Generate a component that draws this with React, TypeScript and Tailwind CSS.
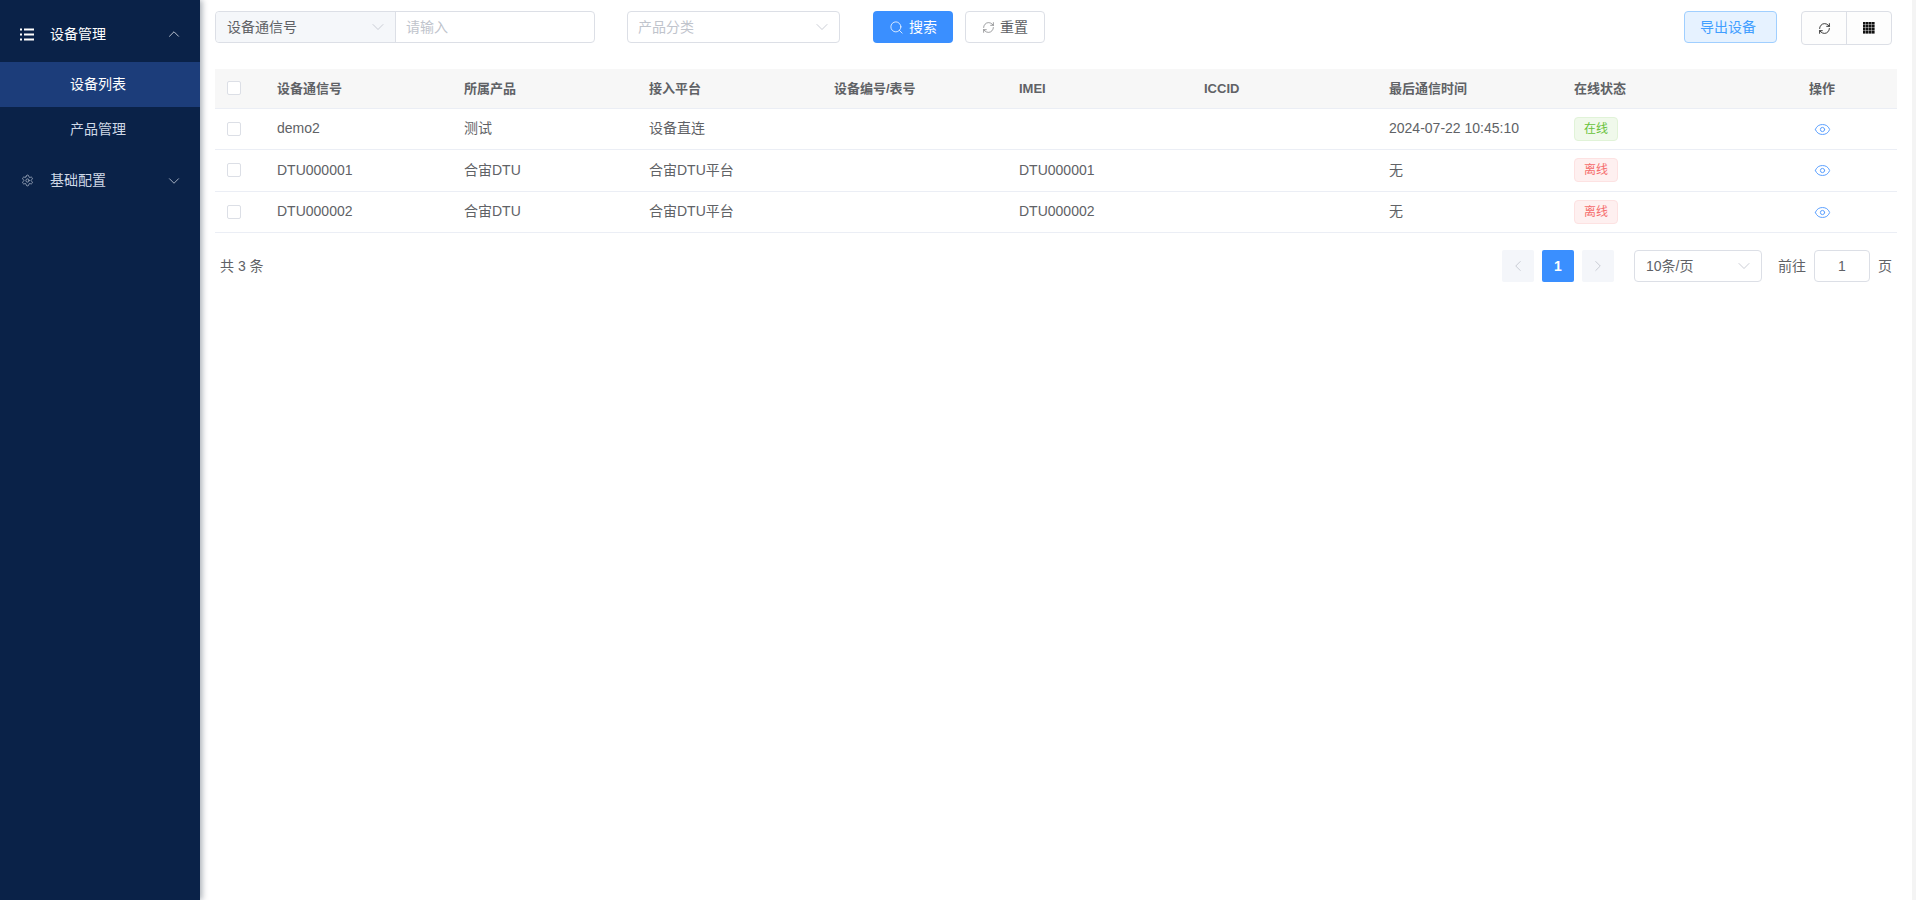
import { ChevronDown, ChevronLeft, ChevronRight, ChevronUp, Eye, RefreshCw, Search, Settings } from "lucide-react";

const rows = [
  { id: "demo2", product: "测试", platform: "设备直连", imei: "", last: "2024-07-22 10:45:10", online: true },
  { id: "DTU000001", product: "合宙DTU", platform: "合宙DTU平台", imei: "DTU000001", last: "无", online: false },
  { id: "DTU000002", product: "合宙DTU", platform: "合宙DTU平台", imei: "DTU000002", last: "无", online: false },
];

const headers = ["设备通信号", "所属产品", "接入平台", "设备编号/表号", "IMEI", "ICCID", "最后通信时间", "在线状态"];

function ListIcon() {
  return (
    <svg width="14" height="13" viewBox="0 0 14 13" fill="white">
      <rect x="0" y="0.5" width="2" height="2" />
      <rect x="0" y="5.5" width="2" height="2" />
      <rect x="0" y="10.5" width="2" height="2" />
      <rect x="4" y="0.5" width="10" height="2" />
      <rect x="4" y="5.5" width="10" height="2" />
      <rect x="4" y="10.5" width="10" height="2" />
    </svg>
  );
}

function GridIcon() {
  const cells = [0, 3, 6, 9];
  return (
    <svg width="12" height="12" viewBox="0 0 12 12" fill="#111">
      {cells.map((y) =>
        cells.map((x) => <rect key={`${x}-${y}`} x={x} y={y} width="2.6" height="2.6" />),
      )}
    </svg>
  );
}

function Checkbox() {
  return <span className="block h-[14px] w-[14px] rounded-[2px] border border-[#dcdfe6] bg-white" />;
}

export default function App() {
  return (
    <div className="flex h-[900px] w-full overflow-hidden bg-white font-['Liberation_Sans','Noto_Sans_CJK_SC',sans-serif] text-[14px] text-[#606266]">
      <aside className="z-10 w-[200px] shrink-0 bg-[#0a2248] shadow-[2px_0_6px_rgba(0,21,41,0.35)]">
        <div className="flex h-[62px] items-center pl-[20px] pr-[17px] pt-[6px] text-white">
          <ListIcon />
          <span className="ml-[16px] flex-1">设备管理</span>
          <ChevronUp size={18} strokeWidth={1.25} className="text-[#c5ccd8]" />
        </div>
        <div className="flex h-[45px] items-center bg-[#1c3d7a] pl-[70px] text-white">设备列表</div>
        <div className="flex h-[45px] items-center pl-[70px] text-[#cfd8e6]">产品管理</div>
        <div className="mt-[6px] flex h-[45px] items-center pl-[20px] pr-[17px] text-[#cfd8e6]">
          <span className="flex w-[14px] justify-center">
            <Settings size={13} strokeWidth={1.5} className="text-[#a9b4c5]" />
          </span>
          <span className="ml-[16px] flex-1">基础配置</span>
          <ChevronDown size={18} strokeWidth={1.25} className="text-[#aeb8c8]" />
        </div>
      </aside>

      <main className="min-w-0 flex-1 pl-[15px] pr-[15px] pt-[11px]">
        <div className="flex items-start">
          <div className="flex h-[32px] w-[380px] rounded-[4px] border border-[#dcdfe6]">
            <div className="flex w-[180px] items-center justify-between rounded-l-[4px] border-r border-[#dcdfe6] bg-[#f5f7fa] pl-[11px] pr-[7px]">
              <span>设备通信号</span>
              <ChevronDown size={20} strokeWidth={1} className="text-[#c0c4cc]" />
            </div>
            <div className="flex flex-1 items-center pl-[10px] text-[#c0c4cc]">请输入</div>
          </div>
          <div className="ml-[32px] flex h-[32px] w-[213px] items-center justify-between rounded-[4px] border border-[#dcdfe6] pl-[10px] pr-[7px] text-[#c0c4cc]">
            <span>产品分类</span>
            <ChevronDown size={20} strokeWidth={1} />
          </div>
          <button className="ml-[33px] flex h-[32px] w-[80px] items-center justify-center gap-[5px] rounded-[4px] bg-[#3a8fff] text-white">
            <Search size={15} strokeWidth={1.25} />
            搜索
          </button>
          <button className="ml-[12px] flex h-[32px] w-[80px] items-center justify-center gap-[5px] rounded-[4px] border border-[#dcdfe6] bg-white">
            <RefreshCw size={13} strokeWidth={1.1} />
            重置
          </button>
          <button className="ml-auto h-[32px] w-[93px] rounded-[4px] border border-[#a0cfff] bg-[#e6f2ff] pl-[15px] text-left text-[#409eff]">
            导出设备
          </button>
          <div className="ml-[24px] mr-[5px] flex h-[34px] w-[91px] rounded-[4px] border border-[#dcdfe6] bg-[#fdfdfd]">
            <span className="flex flex-1 items-center justify-center border-r border-[#dcdfe6] text-[#111]">
              <RefreshCw size={13} strokeWidth={1.5} />
            </span>
            <span className="flex flex-1 items-center justify-center">
              <GridIcon />
            </span>
          </div>
        </div>

        <table className="mt-[24px] w-full table-fixed border-collapse">
          <colgroup>
            <col className="w-[50px]" />
            <col className="w-[187px]" />
            {headers.slice(1).map((h) => (
              <col key={h} />
            ))}
            <col className="w-[150px]" />
          </colgroup>
          <thead>
            <tr className="h-[39px] border-b border-[#ebeef5] bg-[#f7f7f7] text-[13px]">
              <th className="pl-[12px] font-normal">
                <Checkbox />
              </th>
              {headers.map((h) => (
                <th key={h} className="px-[12px] text-left font-bold">
                  {h}
                </th>
              ))}
              <th className="text-center font-bold">操作</th>
            </tr>
          </thead>
          <tbody>
            {rows.map((r) => (
              <tr key={r.id} className="h-[41.5px] border-b border-[#ebeef5]">
                <td className="pl-[12px]">
                  <Checkbox />
                </td>
                <td className="px-[12px]">{r.id}</td>
                <td className="px-[12px]">{r.product}</td>
                <td className="px-[12px]">{r.platform}</td>
                <td className="px-[12px]"></td>
                <td className="px-[12px]">{r.imei}</td>
                <td className="px-[12px]"></td>
                <td className="px-[12px]">{r.last}</td>
                <td className="px-[12px]">
                  {r.online ? (
                    <span className="inline-flex h-[24px] w-[44px] items-center justify-center rounded-[4px] border border-[#e1f3d8] bg-[#f0f9eb] text-[12px] text-[#67c23a]">
                      在线
                    </span>
                  ) : (
                    <span className="inline-flex h-[24px] w-[44px] items-center justify-center rounded-[4px] border border-[#fde2e2] bg-[#fef0f0] text-[12px] text-[#f56c6c]">
                      离线
                    </span>
                  )}
                </td>
                <td className="pt-[1px]">
                  <Eye size={17} strokeWidth={1.4} className="mx-auto text-[#5a9fff]" />
                </td>
              </tr>
            ))}
          </tbody>
        </table>

        <div className="mt-[17px] flex h-[32px] items-center pl-[5px] pr-[5px]">
          <span>共 3 条</span>
          <span className="ml-auto flex h-[32px] w-[32px] items-center justify-center rounded-[2px] bg-[#f4f6fa] text-[#c0c4cc]">
            <ChevronLeft size={18} strokeWidth={1.1} />
          </span>
          <span className="ml-[8px] flex h-[32px] w-[32px] items-center justify-center rounded-[2px] bg-[#3a8fff] font-bold text-white">
            1
          </span>
          <span className="ml-[8px] flex h-[32px] w-[32px] items-center justify-center rounded-[2px] bg-[#f4f6fa] text-[#c0c4cc]">
            <ChevronRight size={18} strokeWidth={1.1} />
          </span>
          <div className="ml-[20px] flex h-[32px] w-[128px] items-center justify-between rounded-[4px] border border-[#dcdfe6] pl-[11px] pr-[7px]">
            <span>10条/页</span>
            <ChevronDown size={20} strokeWidth={1} className="text-[#c0c4cc]" />
          </div>
          <span className="ml-[16px]">前往</span>
          <div className="ml-[8px] flex h-[32px] w-[56px] items-center justify-center rounded-[4px] border border-[#dcdfe6]">1</div>
          <span className="ml-[8px]">页</span>
        </div>
      </main>

      <div className="w-[4px] shrink-0 bg-[#f4f4f4]" />
    </div>
  );
}
